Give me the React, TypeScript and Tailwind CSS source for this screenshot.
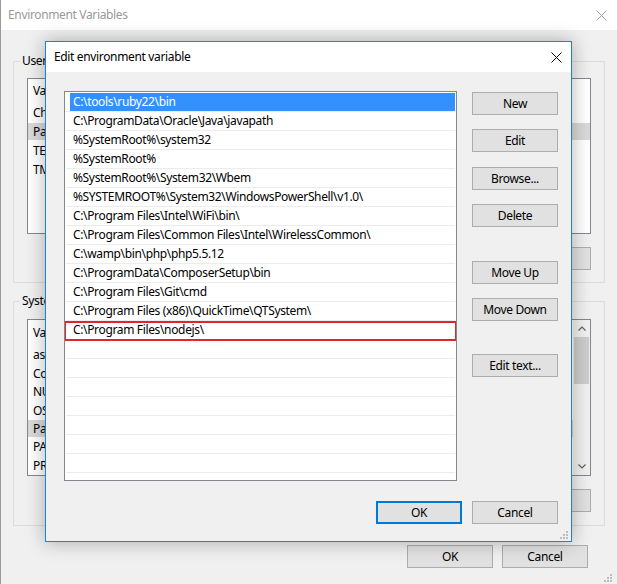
import React from "react";

// rows of the Path variable
const paths = [
  "C:\\tools\\ruby22\\bin",
  "C:\\ProgramData\\Oracle\\Java\\javapath",
  "%SystemRoot%\\system32",
  "%SystemRoot%",
  "%SystemRoot%\\System32\\Wbem",
  "%SYSTEMROOT%\\System32\\WindowsPowerShell\\v1.0\\",
  "C:\\Program Files\\Intel\\WiFi\\bin\\",
  "C:\\Program Files\\Common Files\\Intel\\WirelessCommon\\",
  "C:\\wamp\\bin\\php\\php5.5.12",
  "C:\\ProgramData\\ComposerSetup\\bin",
  "C:\\Program Files\\Git\\cmd",
  "C:\\Program Files (x86)\\QuickTime\\QTSystem\\",
  "C:\\Program Files\\nodejs\\",
];

const userVars = [
  ["ChocolateyLastPathUpdate", "Sat Mar 19 15:25:52 2016"],
  ["Path", "C:\\Users\\user\\AppData\\Roaming\\npm"],
  ["TEMP", "%USERPROFILE%\\AppData\\Local\\Temp"],
  ["TMP", "%USERPROFILE%\\AppData\\Local\\Temp"],
];

const systemVars = [
  ["asl.log", "Destination=file"],
  ["ComSpec", "C:\\WINDOWS\\system32\\cmd.exe"],
  ["NUMBER_OF_PROCESSORS", "4"],
  ["OS", "Windows_NT"],
  ["Path", "C:\\tools\\ruby22\\bin;C:\\ProgramData\\Oracle\\Java\\javapath"],
  ["PATHEXT", ".COM;.EXE;.BAT;.CMD;.VBS;.VBE;.JS;.JSE;.WSF;.WSH;.MSC"],
  ["PROCESSOR_ARCHITECTURE", "AMD64"],
];

const CloseX = ({ color }: { color: string }) => (
  <svg width="11" height="11" viewBox="0 0 11 11">
    <path d="M0.5 0.5 L10.5 10.5 M10.5 0.5 L0.5 10.5" stroke={color} strokeWidth="1" />
  </svg>
);

const Grip = () => (
  <svg width="9" height="9" viewBox="0 0 9 9">
    <rect x="7" y="1" width="2" height="2" fill="#bdbdbd" />
    <rect x="4" y="4" width="2" height="2" fill="#bdbdbd" />
    <rect x="7" y="4" width="2" height="2" fill="#bdbdbd" />
    <rect x="1" y="7" width="2" height="2" fill="#bdbdbd" />
    <rect x="4" y="7" width="2" height="2" fill="#bdbdbd" />
    <rect x="7" y="7" width="2" height="2" fill="#bdbdbd" />
  </svg>
);

const WinButton = ({ label, primary = false }: { label: string; primary?: boolean }) => (
  <button
    className={
      "w-[86px] h-[23px] bg-[#e1e1e1] text-[12px] text-black leading-none flex items-center justify-center " +
      (primary ? "border-2 border-[#0078d7]" : "border border-[#adadad]")
    }
  >
    {label}
  </button>
);

// a list view with a header and rows, used in the background window
const VarList = ({
  rows,
  selected,
  height,
  headerHeight,
  scroll = false,
}: {
  rows: string[][];
  selected: number;
  height: string;
  headerHeight: string;
  scroll?: boolean;
}) => (
  <div className={"bg-white border border-[#828790] overflow-hidden flex " + height}>
    <div className="flex-1 flex flex-col">
      <div className={"flex items-center text-[12px] " + headerHeight}>
        <span className="pl-[5px] w-[160px]">Variable</span>
        <span>Value</span>
      </div>
      {rows.map((r, i) => (
        <div key={i} className="h-[19px] flex items-center text-[12px] whitespace-nowrap">
          <div className={"flex items-center h-[17px] w-full " + (i === selected ? "bg-[#d9d9d9]" : "")}>
            <span className="pl-[5px] w-[160px]">{r[0]}</span>
            <span>{r[1]}</span>
          </div>
        </div>
      ))}
    </div>
    {scroll && (
      <div className="w-[17px] bg-[#f0f0f0] flex flex-col items-center">
        <div className="h-[17px] flex items-center justify-center">
          <svg width="8" height="5" viewBox="0 0 8 5">
            <path d="M0.5 4.5 L4 1 L7.5 4.5" stroke="#606060" strokeWidth="1.2" fill="none" />
          </svg>
        </div>
        <div className="w-[15px] h-[47px] bg-[#cdcdcd]" />
        <div className="flex-1" />
        <div className="h-[17px] flex items-center justify-center">
          <svg width="8" height="5" viewBox="0 0 8 5">
            <path d="M0.5 0.5 L4 4 L7.5 0.5" stroke="#606060" strokeWidth="1.2" fill="none" />
          </svg>
        </div>
      </div>
    )}
  </div>
);

export default function App() {
  return (
    <div className="relative w-[617px] h-[584px] overflow-hidden bg-[#f0f0f0] font-['Noto_Sans','Liberation_Sans',sans-serif] tracking-[-0.35px] text-black">
      {/* Background window: Environment Variables */}
      <div className="flex flex-col h-full border-l border-[#9a9a9a]">
        <div className="h-[30px] bg-white flex items-center justify-between pl-[7px] pr-[10px] shrink-0">
          <span className="text-[12px] text-[#999999]">Environment Variables</span>
          <CloseX color="#a0a0a0" />
        </div>

        <div className="flex flex-col px-[12px]">
          <fieldset className="mt-[23px] border border-[#dcdcdc] px-[13px] pb-[12px] pt-[9px]">
            <legend className="-ml-[7px] px-[2px] text-[12px] leading-[16px]">User variables for user</legend>
            <VarList rows={userVars} selected={1} height="h-[156px]" headerHeight="h-[24px]" />
            <div className="flex justify-end gap-[9px] mt-[13px]">
              <WinButton label="New..." />
              <WinButton label="Edit..." />
              <WinButton label="Delete" />
            </div>
          </fieldset>

          <fieldset className="mt-[10px] border border-[#dcdcdc] px-[13px] pb-[13px] pt-[10px]">
            <legend className="-ml-[7px] px-[2px] text-[12px] leading-[16px]">System variables</legend>
            <VarList rows={systemVars} selected={4} height="h-[157px]" headerHeight="h-[27px]" scroll />
            <div className="flex justify-end gap-[9px] mt-[13px]">
              <WinButton label="New..." />
              <WinButton label="Edit..." />
              <WinButton label="Delete" />
            </div>
          </fieldset>

          <div className="flex justify-end gap-[9px] mt-[19px] pr-[17px]">
            <WinButton label="OK" />
            <WinButton label="Cancel" />
          </div>
          <div className="flex justify-end mt-[5px] -mr-[7px]">
            <Grip />
          </div>
        </div>
      </div>

      {/* Foreground dialog: Edit environment variable */}
      <div className="absolute left-[45px] top-[41px] w-[527px] h-[501px] border border-[#1883d7] bg-[#f0f0f0] flex flex-col shadow-[0_0_18px_rgba(0,0,0,0.3)]">
        <div className="h-[30px] bg-white flex items-center justify-between pl-[8px] pr-[9px] shrink-0">
          <span className="text-[12px]">Edit environment variable</span>
          <CloseX color="#000000" />
        </div>

        <div className="flex pl-[18px] pr-[13px] pt-[19px]">
          <div className="w-[393px] h-[390px] bg-white border border-[#828790] p-[1px] overflow-hidden">
            {Array.from({ length: 21 }).map((_, i) => (
              <div key={i} className="relative h-[19px] border-b border-[#ececec] flex text-[12px] whitespace-nowrap">
                <div
                  className={
                    "flex-1 ml-[4px] pl-[3px] flex items-center " +
                    (i === 0 ? "bg-[#3390ff] text-white" : "")
                  }
                >
                  {paths[i] ?? ""}
                </div>
                {i === 12 && (
                  <div className="absolute left-[-2px] right-[-2px] top-0 bottom-[-2px] border-2 border-[#e0262d]" />
                )}
              </div>
            ))}
          </div>

          <div className="flex flex-col ml-[15px] pt-[1px]">
            <WinButton label="New" />
            <div className="mt-[14px]"><WinButton label="Edit" /></div>
            <div className="mt-[15px]"><WinButton label="Browse..." /></div>
            <div className="mt-[14px]"><WinButton label="Delete" /></div>
            <div className="mt-[34px]"><WinButton label="Move Up" /></div>
            <div className="mt-[14px]"><WinButton label="Move Down" /></div>
            <div className="mt-[33px]"><WinButton label="Edit text..." /></div>
          </div>
        </div>

        <div className="flex justify-end gap-[10px] pr-[13px] mt-[20px]">
          <WinButton label="OK" primary />
          <WinButton label="Cancel" />
        </div>
        <div className="flex justify-end pr-[3px] mt-[6px]">
          <Grip />
        </div>
      </div>
    </div>
  );
}
